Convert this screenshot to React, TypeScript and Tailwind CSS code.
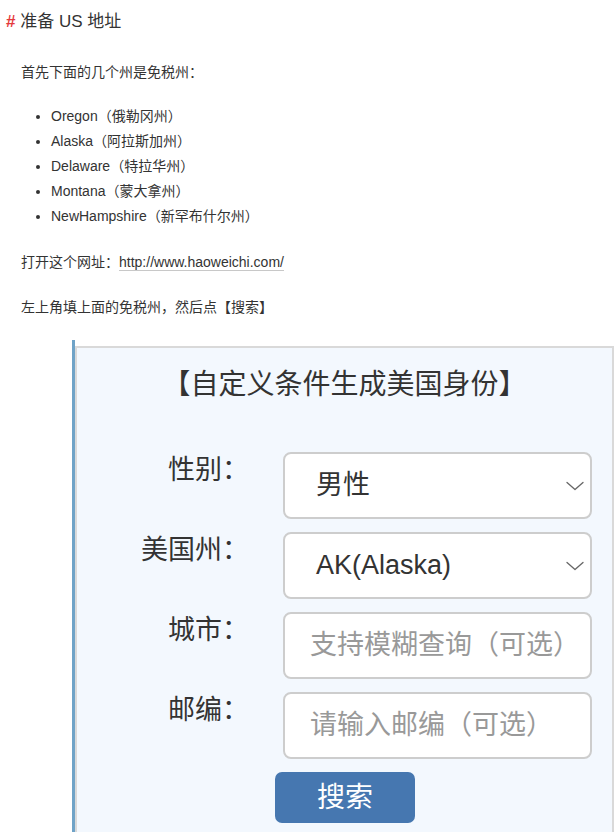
const textFont = "font-['Liberation_Sans','Noto_Sans_CJK_SC',sans-serif]";
const formFont = "font-['Liberation_Sans','Noto_Sans_CJK_SC',sans-serif]";

const states = [
  { en: "Oregon", zh: "（俄勒冈州）" },
  { en: "Alaska", zh: "（阿拉斯加州）" },
  { en: "Delaware", zh: "（特拉华州）" },
  { en: "Montana", zh: "（蒙大拿州）" },
  { en: "NewHampshire", zh: "（新罕布什尔州）" },
];

const Chevron = () => (
  <svg width="18" height="10" viewBox="0 0 18 10" fill="none" className="shrink-0">
    <path d="M1 1.5 L9 8.5 L17 1.5" stroke="#666" strokeWidth="1.3" strokeLinecap="round" strokeLinejoin="round" />
  </svg>
);

function FormRow({ label, children }: { label: string; children: React.ReactNode }) {
  return (
    <div className="flex items-start">
      <div className="w-[172px] whitespace-nowrap text-right text-[27px] leading-[36px] text-[#333]">{label}</div>
      <div className="ml-[34px] w-[309px]">{children}</div>
    </div>
  );
}

function SelectBox({ value }: { value: string }) {
  return (
    <div className="flex h-[67px] items-center justify-between rounded-[8px] border-2 border-[#cdcdcd] bg-white pl-[31px] pr-[6px]">
      <span className="text-[27px] text-[#333]">{value}</span>
      <Chevron />
    </div>
  );
}

function InputBox({ placeholder }: { placeholder: string }) {
  return (
    <div className="flex h-[67px] items-center overflow-hidden rounded-[8px] border-2 border-[#cdcdcd] bg-white pl-[25px] pr-[17px]">
      <span className="block overflow-hidden whitespace-nowrap text-[27px] text-[#999]">{placeholder}</span>
    </div>
  );
}

export default function App() {
  return (
    <div className={`h-[832px] w-[616px] overflow-hidden bg-white text-[#333] ${textFont}`}>
      <h2 className="pl-[6px] pt-[10px] text-[17px] leading-[24px] font-normal">
        <span className="font-bold text-[#e4393c]">#</span> 准备 US 地址
      </h2>

      <p className="mt-[26px] pl-[21px] text-[14px] leading-[24px]">首先下面的几个州是免税州：</p>

      <ul className="mt-[20px] list-disc pl-[51px] text-[14px] leading-[25px]">
        {states.map((s) => (
          <li key={s.en}>
            {s.en}
            {s.zh}
          </li>
        ))}
      </ul>

      <p className="mt-[21px] pl-[21px] text-[14px] leading-[24px]">
        打开这个网址：<span className="border-b border-[#c8c8c8]">http://www.haoweichi.com/</span>
      </p>

      <p className="mt-[21px] pl-[21px] text-[14px] leading-[24px]">左上角填上面的免税州，然后点【搜索】</p>

      <div className="ml-[72px] mt-[21px] border-l-[3px] border-[#6fa3c7] pt-[6px]">
        <div className={`h-[500px] w-[539px] border-2 border-[#d9d9d9] bg-[#f3f8fe] ${formFont}`}>
          <div className="pt-[19px] text-center text-[28px] leading-[36px] text-[#333]">【自定义条件生成美国身份】</div>

          <div className="mt-[49px] flex flex-col gap-[13px]">
            <FormRow label="性别：">
              <SelectBox value="男性" />
            </FormRow>
            <FormRow label="美国州：">
              <SelectBox value="AK(Alaska)" />
            </FormRow>
            <FormRow label="城市：">
              <InputBox placeholder="支持模糊查询（可选）" />
            </FormRow>
            <FormRow label="邮编：">
              <InputBox placeholder="请输入邮编（可选）" />
            </FormRow>
            <div className="pl-[198px]">
              <button className="flex h-[51px] w-[140px] items-center justify-center rounded-[7px] bg-[#4677b0] text-[28px] text-white">
                搜索
              </button>
            </div>
          </div>
        </div>
      </div>
    </div>
  );
}
